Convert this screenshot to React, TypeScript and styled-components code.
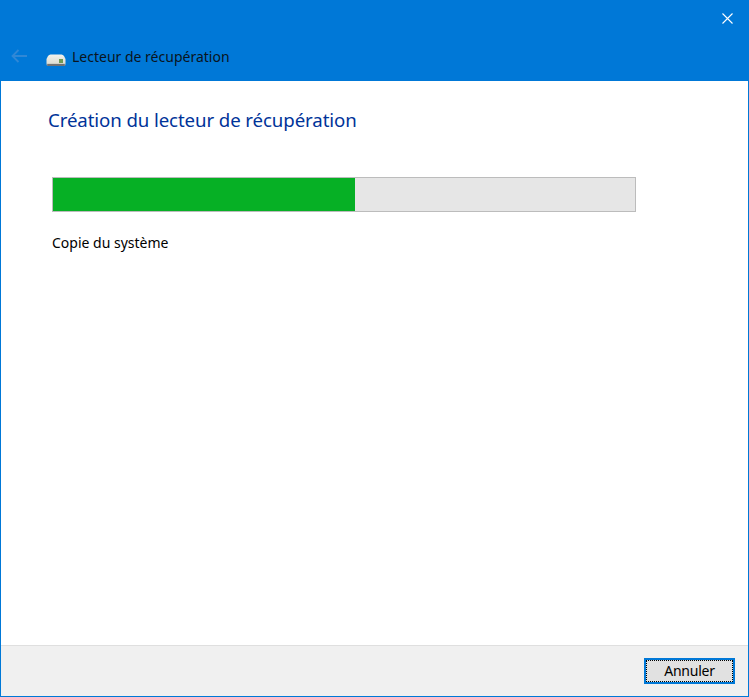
import React from "react";
import styled, { createGlobalStyle } from "styled-components";

const Global = createGlobalStyle`
  html, body { margin: 0; padding: 0; background: #fff; }
  #root { width: 749px; height: 697px; }
`;

const Win = styled.div`
  box-sizing: border-box;
  width: 749px;
  height: 697px;
  display: flex;
  flex-direction: column;
  border: 1px solid #0078d7;
  border-top: 0;
  background: #fff;
  font-family: "Noto Sans", "Open Sans", sans-serif;
  color: #000;
`;

const Header = styled.header`
  height: 81px;
  flex: none;
  margin: 0 -1px;
  background: #0078d7;
  display: flex;
  flex-direction: column;
  padding: 0 16px 0 11px;
  box-sizing: border-box;
`;

const CloseRow = styled.div`
  height: 36px;
  margin-bottom: 4px;
  display: flex;
  justify-content: flex-end;
  align-items: center;
  box-sizing: border-box;
`;

const NavRow = styled.div`
  display: flex;
  align-items: center;
  height: 32px;
`;

const Back = styled.div`
  width: 16px;
  height: 14px;
  margin-right: 19px;
  margin-top: -1px;
  display: flex;
`;

const DriveWrap = styled.div`
  width: 20px;
  height: 12px;
  margin-right: 6px;
  margin-top: 8px;
  display: flex;
`;

const AppTitle = styled.span`
  font-size: 14px;
  line-height: 20px;
  color: #0a1420;
  margin-top: 1px;
`;

const Body = styled.main`
  flex: 1;
  padding: 24px 0 0 47px;
  box-sizing: border-box;
`;

const Heading = styled.h1`
  margin: 0;
  font-size: 18.67px;
  line-height: 30px;
  font-weight: 400;
  color: #003399;
  letter-spacing: -0.1px;
`;

const Content = styled.div`
  padding: 42px 0 0 4px;
`;

const Track = styled.div`
  box-sizing: border-box;
  width: 584px;
  height: 35px;
  background: #e6e6e6;
  border: 1px solid #bcbcbc;
`;

const Fill = styled.div`
  height: 100%;
  background: #06b025;
`;

const Status = styled.div`
  margin-top: 21px;
  font-size: 14px;
  line-height: 20px;
`;

const Footer = styled.footer`
  flex: none;
  height: 51px;
  box-sizing: border-box;
  background: #f0f0f0;
  border-top: 1px solid #dfdfdf;
  display: flex;
  justify-content: flex-end;
  padding: 12px 13px 0 0;
`;

const Cancel = styled.button`
  box-sizing: border-box;
  width: 91px;
  height: 26px;
  padding: 0 0 1px;
  background: #e1e1e1;
  border: 2px solid #0078d7;
  outline: 1px dotted #000;
  outline-offset: -3px;
  font-family: inherit;
  font-size: 14px;
  letter-spacing: -0.22px;
  color: #000;
`;

export default function App() {
  return (
    <>
      <Global />
      <Win>
        <Header>
          <CloseRow>
            <svg width="11" height="11" viewBox="0 0 11 11" fill="none" stroke="#ffffff" strokeWidth="1.1">
              <path d="M0.5 0.5 L10.5 10.5 M10.5 0.5 L0.5 10.5" />
            </svg>
          </CloseRow>
          <NavRow>
            <Back>
              <svg width="16" height="14" viewBox="0 0 16 14" fill="none" stroke="#3088d6" strokeWidth="1.8">
                <path d="M16 7 H1.5 M7.5 1 L1.5 7 L7.5 13" />
              </svg>
            </Back>
            <DriveWrap>
              <svg width="20" height="12" viewBox="0 0 20 12">
                <defs>
                  <linearGradient id="drv" x1="0" y1="0" x2="0" y2="1">
                    <stop offset="0" stopColor="#f2f2ec" />
                    <stop offset="0.7" stopColor="#dfe0d6" />
                    <stop offset="1" stopColor="#a9aaa4" />
                  </linearGradient>
                </defs>
                <path d="M4.5 0.5 H15.5 Q17 0.5 18 2 L19.5 5 V10 Q19.5 12 18 12 H2 Q0.5 12 0.5 10 V5 L2 2 Q3 0.5 4.5 0.5 Z" fill="url(#drv)" />
                <rect x="1" y="10" width="18" height="2" rx="1" fill="#6f7274" />
                <rect x="13" y="5" width="4" height="4" fill="#6f9a55" />
              </svg>
            </DriveWrap>
            <AppTitle>Lecteur de récupération</AppTitle>
          </NavRow>
        </Header>
        <Body>
          <Heading>Création du lecteur de récupération</Heading>
          <Content>
            <Track>
              <Fill style={{ width: `${(302 / 582) * 100}%` }} />
            </Track>
            <Status>Copie du système</Status>
          </Content>
        </Body>
        <Footer>
          <Cancel>Annuler</Cancel>
        </Footer>
      </Win>
    </>
  );
}
